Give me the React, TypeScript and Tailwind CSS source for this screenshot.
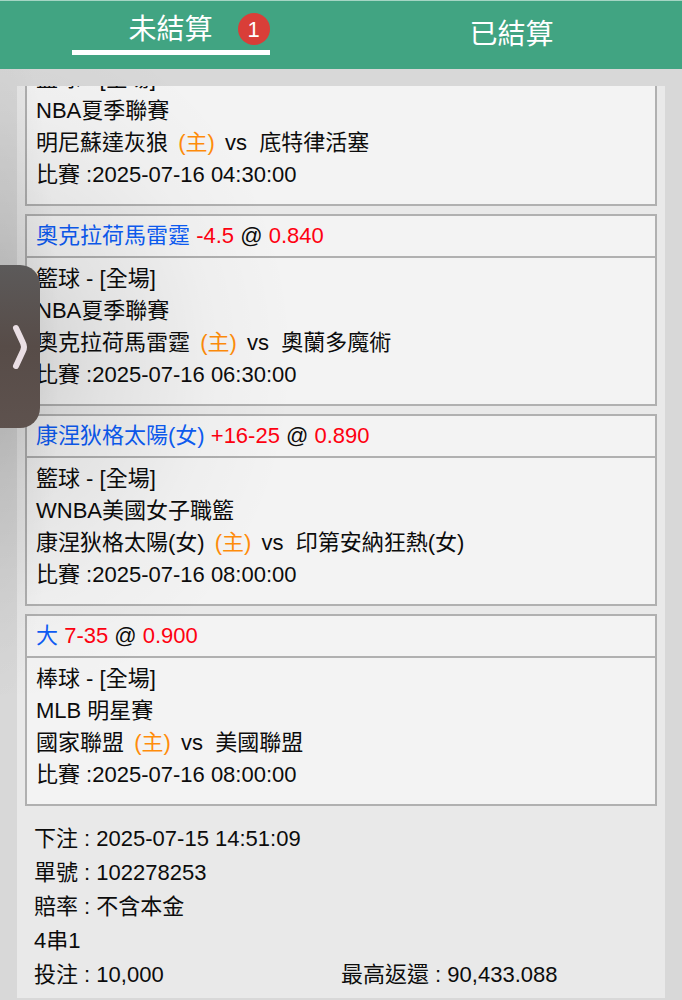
type Bet = {
  pick?: string;
  line?: string;
  odds?: string;
  sport: string;
  league: string;
  home: string;
  away: string;
  time: string;
};

const bets: Bet[] = [
  { sport: "籃球 - [全場]", league: "NBA夏季聯賽", home: "明尼蘇達灰狼", away: "底特律活塞", time: "2025-07-16 04:30:00" },
  { pick: "奧克拉荷馬雷霆", line: "-4.5", odds: "0.840", sport: "籃球 - [全場]", league: "NBA夏季聯賽", home: "奧克拉荷馬雷霆", away: "奧蘭多魔術", time: "2025-07-16 06:30:00" },
  { pick: "康涅狄格太陽(女)", line: "+16-25", odds: "0.890", sport: "籃球 - [全場]", league: "WNBA美國女子職籃", home: "康涅狄格太陽(女)", away: "印第安納狂熱(女)", time: "2025-07-16 08:00:00" },
  { pick: "大", line: "7-35", odds: "0.900", sport: "棒球 - [全場]", league: "MLB 明星賽", home: "國家聯盟", away: "美國聯盟", time: "2025-07-16 08:00:00" },
];

const summary = ["下注 : 2025-07-15 14:51:09", "單號 : 102278253", "賠率 : 不含本金", "4串1"];

function BetCard({ bet }: { bet: Bet }) {
  return (
    <article className="shrink-0 border-2 border-[#b0b0b0] bg-[#f3f3f3]">
      {bet.pick && (
        <h2 className="border-b-2 border-[#b0b0b0] px-[9px] py-1 leading-8">
          <span className="text-[#0d5cf5]">{bet.pick}</span> <span className="text-[#ff0010]">{bet.line}</span> @{" "}
          <span className="text-[#ff0010]">{bet.odds}</span>
        </h2>
      )}
      <div className="px-[9px] pt-[5px] pb-[13px] leading-8">
        <p>{bet.sport}</p>
        <p>{bet.league}</p>
        <p className="whitespace-pre-wrap">
          {bet.home} <span className="mx-1 text-[#ff8c0a]">(主)</span> vs{"  "}
          {bet.away}
        </p>
        <p>比賽 :{bet.time}</p>
      </div>
    </article>
  );
}

export default function App() {
  return (
    <div className="relative flex h-screen flex-col overflow-hidden bg-[#d8d8d8] font-['Liberation_Sans','Noto_Sans_CJK_TC',sans-serif] text-[22px] text-[#0c0c0c]">
      <nav className="grid h-[69px] shrink-0 grid-cols-2 border-t border-[#a5d5c4] bg-[#41a482] text-[28px] text-white">
        <button className="flex flex-col items-center pt-2">
          <span className="relative w-[198px] border-b-5 border-white text-center leading-[41px]">
            未結算
            <span className="absolute top-1 right-0 flex size-8 items-center justify-center rounded-full bg-[#d93e38] text-[22px]">
              1
            </span>
          </span>
        </button>
        <button>已結算</button>
      </nav>

      <main className="mx-[17px] mt-[17px] mb-0.5 flex min-h-0 flex-1 flex-col justify-end gap-2 overflow-hidden bg-[#e9e9e9] px-2 pb-1.5">
        {bets.map((bet, i) => (
          <BetCard key={i} bet={bet} />
        ))}
        <section className="mt-2 shrink-0 px-[9px] leading-[34px]">
          {summary.map((row) => (
            <p key={row}>{row}</p>
          ))}
          <div className="grid grid-cols-2">
            <p>投注 : 10,000</p>
            <p>最高返還 : 90,433.088</p>
          </div>
        </section>
      </main>

      {/* Drawer handle and the soft shade around it */}
      <div className="pointer-events-none absolute top-[69px] left-0 h-[640px] w-[300px] bg-[radial-gradient(ellipse_at_0%_45%,rgba(0,0,0,0.15),rgba(0,0,0,0.07)_25%,rgba(0,0,0,0.02)_50%,transparent_70%)]" />
      <div className="pointer-events-none absolute top-[69px] left-0 h-[640px] w-[60px] bg-[radial-gradient(ellipse_at_0%_45%,rgba(0,0,0,0.08),transparent_70%)]" />
      <button
        aria-label="展開"
        className="absolute top-[265px] left-0 flex h-[163px] w-10 items-center justify-center rounded-r-[20px] bg-linear-to-b from-[#5c5a5a] via-[#574c48] to-[#5e524e]"
      >
        <svg className="h-12 w-5" viewBox="0 0 20 48" fill="none" stroke="#eadfe4" strokeWidth="6" strokeLinecap="round" strokeLinejoin="round">
          <path d="M6 5L13 20Q15 24 13 28L6 43" />
        </svg>
      </button>
    </div>
  );
}
